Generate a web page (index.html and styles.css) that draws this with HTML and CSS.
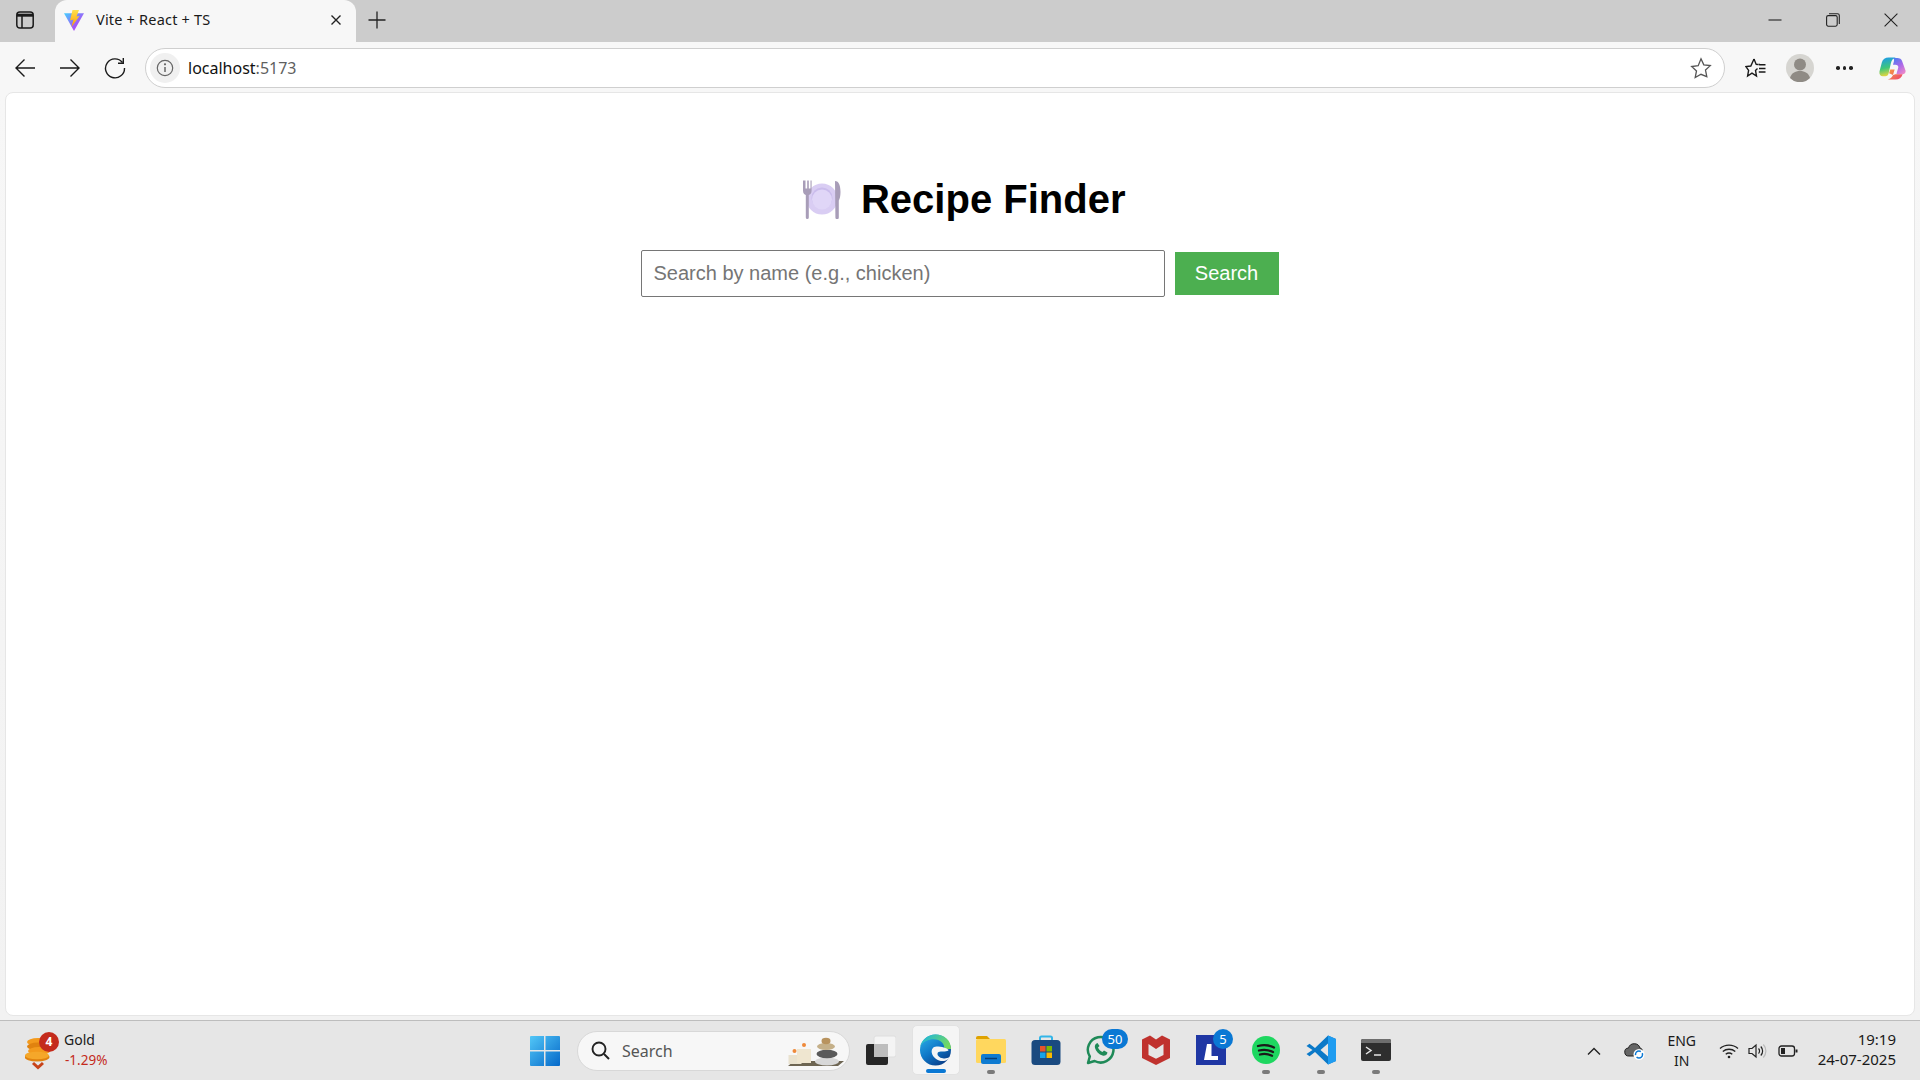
FILE: index.html
```html
<!DOCTYPE html>
<html lang="en">
<head>
<meta charset="utf-8">
<title>Vite + React + TS</title>
<link rel="stylesheet" href="styles.css">
</head>
<body>
<div class="window">
  <div class="tabbar">
    <button class="tab-actions" aria-label="Tab actions">
      <svg width="20" height="20" viewBox="0 0 20 20" fill="none" stroke="#1a1a1a" stroke-width="1.5"><rect x="1.8" y="2" width="16.4" height="16" rx="3"/><path d="M2 5.2h16" stroke-width="3"/><path d="M7 6v12"/></svg>
    </button>
    <div class="tab">
      <svg class="favicon" width="20" height="21" viewBox="0 0 20 21"><defs><linearGradient id="vt" x1="0" y1="0" x2="1" y2="1"><stop offset="0" stop-color="#41d1ff"/><stop offset="0.6" stop-color="#a05cf8"/><stop offset="1" stop-color="#bd34fe"/></linearGradient><linearGradient id="vb" x1="0" y1="0" x2="0" y2="1"><stop offset="0" stop-color="#ffe14d"/><stop offset="1" stop-color="#ff9d00"/></linearGradient></defs><path d="M0 3.300 L20 3.300 L10 21Z" fill="url(#vt)"/><path d="M8.500 0 L15 0 L12.500 6.500 L15.500 6 L7.500 17 L9.500 9.500 L6 10.500 Z" fill="url(#vb)"/></svg>
      <span class="tab-title">Vite + React + TS</span>
      <svg class="tab-close" width="12" height="12" viewBox="0 0 12 12" stroke="#222" stroke-width="1.4"><path d="M1.5 1.5l9 9M10.5 1.5l-9 9"/></svg>
    </div>
    <svg class="new-tab" width="18" height="18" viewBox="0 0 18 18" stroke="#222" stroke-width="1.3"><path d="M9 0.5v17M0.5 9h17"/></svg>
    <div class="win-controls">
      <svg width="14" height="14" viewBox="0 0 14 14" stroke="#222" stroke-width="1.1"><path d="M0.5 7h13"/></svg>
      <svg width="14" height="14" viewBox="0 0 14 14" fill="none" stroke="#222" stroke-width="1.1"><rect x="0.6" y="2.6" width="10.6" height="10.6" rx="1.6"/><path d="M3 0.7h8.5a1.8 1.8 0 0 1 1.8 1.8V11"/></svg>
      <svg width="14" height="14" viewBox="0 0 14 14" stroke="#222" stroke-width="1.1"><path d="M0.6 0.6l12.8 12.8M13.4 0.6L0.6 13.4"/></svg>
    </div>
  </div>

  <div class="toolbar">
    <svg class="nav-btn" width="22" height="20" viewBox="0 0 22 20" fill="none" stroke="#1a1a1a" stroke-width="1.4"><path d="M21 10H2M10.5 1.5L2 10l8.5 8.5"/></svg>
    <svg class="nav-btn" width="22" height="20" viewBox="0 0 22 20" fill="none" stroke="#1a1a1a" stroke-width="1.4"><path d="M1 10h19M11.500 1.500L20 10l-8.500 8.500"/></svg>
    <svg class="nav-btn" width="22" height="22" viewBox="0 0 22 22" fill="none" stroke="#1a1a1a" stroke-width="1.4"><path d="M18.500 5.500A9.500 9.500 0 1 0 20.500 11"/><path d="M19.300 1v5.300H14"/></svg>
    <div class="address">
      <span class="info-chip">
        <svg width="18" height="18" viewBox="0 0 18 18" fill="none" stroke="#666" stroke-width="1.200"><circle cx="9" cy="9" r="7.700"/><path d="M9 8v5" stroke-width="1.500"/><circle cx="9" cy="5.300" r="0.500" fill="#666"/></svg>
      </span>
      <span class="url">localhost<span class="url-port">:5173</span></span>
      <svg class="star" width="22" height="22" viewBox="0 0 22 22" fill="none" stroke="#555" stroke-width="1.300"><path d="M11 1.800l2.800 6 6.500.8-4.800 4.500 1.300 6.500L11 17.300l-5.800 3.200 1.300-6.500-4.800-4.500 6.500-.8z"/></svg>
    </div>
    <svg class="tool-fav" width="22" height="22" viewBox="0 0 22 22" fill="none" stroke="#1a1a1a" stroke-width="1.400"><path d="M9 2l2.200 5.400 2 .1M15 7.500h-1.500M12.500 11.500l-2 1.900 1 5.600L7 16.200 2.600 19l1-5.600L.8 9.500l5-.5L9 2"/><path d="M14.500 7.800H20.500M14 11.500h6.500M13.800 15h6.700"/></svg>
    <div class="avatar">
      <svg width="28" height="28" viewBox="0 0 28 28"><circle cx="14" cy="14" r="14" fill="#d6d5d1"/><circle cx="14" cy="10.500" r="6" fill="#8f8b85"/><path d="M4 24c1.500-5 5-7 10-7s8.500 2 10 7a14 14 0 0 1-20 0z" fill="#8f8b85"/></svg>
    </div>
    <span class="dots"><i></i><i></i><i></i></span>
    <svg class="copilot" width="27" height="27" viewBox="0 0 28 28"><defs><linearGradient id="c1" x1="0.300" y1="0" x2="0.500" y2="1"><stop offset="0" stop-color="#1c9ce8"/><stop offset="0.55" stop-color="#3ec77a"/><stop offset="1" stop-color="#f5d73b"/></linearGradient><linearGradient id="c2" x1="0.200" y1="0" x2="0.800" y2="1"><stop offset="0" stop-color="#4c7df0"/><stop offset="0.5" stop-color="#a868ea"/><stop offset="1" stop-color="#ee88c8"/></linearGradient><linearGradient id="c3" x1="0" y1="0" x2="1" y2="0.600"><stop offset="0" stop-color="#f7a23b"/><stop offset="1" stop-color="#ee4f6a"/></linearGradient></defs><path d="M10 2.500h7.500c-3 .5-4.500 3-5.200 6L10 19c-.4 2-1.500 3-3.500 3H4C1.500 22 0 20 .5 17L3 7.500C3.800 4.500 6.500 2.500 10 2.500z" fill="url(#c1)"/><path d="M14 3h5c2.500 0 4.300 1 5 3.500L27.500 16c.5 2.500-1 4-3.300 4H18l2-7c.5-2-1.200-3-3-3h-2.500l1-3.500C16 4.500 15.500 3.500 14 3z" fill="url(#c2)"/><path d="M10.500 19l1.200-4h4.500l-1 3.500c-.9 4.500-3.500 7-7.500 7H17c4 0 6.500-2 7.500-5.500H18c-2 0-3 .8-3.500.8z" fill="url(#c3)"/></svg>
  </div>

  <div class="viewport">
    <main class="page">
      <h1 class="title">
        <svg class="plate" width="40" height="40" viewBox="0 0 40 40">
          <circle cx="20" cy="20" r="15.500" fill="#d9cdf3"/>
          <circle cx="20" cy="19" r="10.500" fill="#cabcec"/>
          <circle cx="20" cy="20.500" r="10" fill="#e0d6f7"/>
          <path d="M1 1.500v10c0 3 1.500 4 2.800 4.500V38.500a1.500 1.500 0 0 0 3 0V16c1.300-.5 2.800-1.500 2.800-4.500v-10H8.500v8H6.800v-8H5.200v8H3.500v-8z" fill="#a89db8"/>
          <path d="M33 2c3 0 5.500 3 5.500 11 0 4-.7 7-1.700 8.500v17a1.700 1.700 0 0 1-3.400 0z" fill="#a89db8"/>
        </svg>
        <span>Recipe Finder</span>
      </h1>
      <form class="search-form">
        <input class="search-input" type="text" placeholder="Search by name (e.g., chicken)">
        <button class="search-btn" type="button">Search</button>
      </form>
    </main>
  </div>

  <footer class="taskbar">
    <div class="widget">
      <div class="gold-icon">
        <svg width="26" height="38" viewBox="0 0 26 38"><ellipse cx="13" cy="10" rx="11" ry="4" fill="#f39a1d"/><ellipse cx="13" cy="14.500" rx="11" ry="4" fill="#e0820f"/><ellipse cx="14" cy="19" rx="11" ry="4" fill="#f39a1d"/><ellipse cx="12" cy="25" rx="12.500" ry="4.500" fill="#e0820f"/><ellipse cx="12" cy="23.500" rx="12" ry="3.800" fill="#f5a72a"/><path d="M8 31l5 4.500L18 31" fill="none" stroke="#c8431a" stroke-width="3"/></svg>
        <span class="gold-badge">4</span>
      </div>
      <div class="widget-text">
        <span class="widget-name">Gold</span>
        <span class="widget-change">-1.29%</span>
      </div>
    </div>

    <div class="start">
      <svg width="30" height="30" viewBox="0 0 30 30"><defs><linearGradient id="w" x1="0" y1="0" x2="1" y2="1"><stop offset="0" stop-color="#52c7f7"/><stop offset="1" stop-color="#0568c9"/></linearGradient></defs><path d="M1 0h13v14H0V1a1 1 0 0 1 1-1zM15.500 0H29a1 1 0 0 1 1 1v13H15.500zM0 15.500h14V30H1a1 1 0 0 1-1-1zM15.500 15.500H30V29a1 1 0 0 1-1 1H15.500z" fill="url(#w)"/></svg>
    </div>

    <div class="search-pill">
      <svg width="19" height="19" viewBox="0 0 19 19" fill="none" stroke="#222" stroke-width="1.900"><circle cx="8" cy="8" r="6.500"/><path d="M13 13l5 5"/></svg>
      <span class="pill-text">Search</span>
      <svg class="pill-art" width="58" height="32" viewBox="0 0 58 32"><path d="M0 31l6-5h50l-6 5z" fill="#6d6552"/><rect x="0.500" y="20" width="13" height="9" fill="#e9e2cf"/><rect x="9" y="14" width="14" height="14" fill="#efe6d0"/><circle cx="6.500" cy="16" r="2" fill="#ef8a3a"/><circle cx="16" cy="10" r="2" fill="#ef8a3a"/><ellipse cx="39" cy="26.500" rx="12" ry="4" fill="#d8d8d8"/><ellipse cx="39" cy="19" rx="10.500" ry="4.200" fill="#5a5a5a"/><ellipse cx="38" cy="11.500" rx="9" ry="3.500" fill="#c5b089"/><ellipse cx="38" cy="6" rx="4.500" ry="3.200" fill="#b8935e"/></svg>
    </div>

    <div class="apps">
      <div class="app">
        <svg width="30" height="30" viewBox="0 0 30 30"><rect x="8" y="1" width="22" height="21" rx="2" fill="#f4f4f4" stroke="#dedede"/><rect x="0" y="9" width="22" height="21" rx="2" fill="#262626"/><rect x="8" y="9" width="14" height="13" fill="#bdbdbd"/></svg>
      </div>
      <div class="app app-active">
        <svg width="31" height="32" viewBox="0 0 32 32"><defs><linearGradient id="e1" x1="0" y1="0" x2="0.700" y2="1"><stop offset="0" stop-color="#2fb4ea"/><stop offset="0.550" stop-color="#0f78c8"/><stop offset="1" stop-color="#0a3f8a"/></linearGradient><linearGradient id="e2" x1="0" y1="0.300" x2="1" y2="0.700"><stop offset="0" stop-color="#1fb6dc"/><stop offset="1" stop-color="#78dc58"/></linearGradient></defs><circle cx="16" cy="16" r="16" fill="url(#e1)"/><path d="M16 0C8 0 2 5 0 13c3-6 9-8 14-8 7 0 12 5 11 10h7C32 6 25 0 16 0z" fill="url(#e2)"/><path d="M17 12.500c-3.500 0-5.500 3-4.800 6.500 1.300 5.500 7.800 9.500 13.800 8 2-.5 3.500-1.500 4.500-3l-.5-.5c-1.500 1-4 1.500-6.500 1-3.500-.7-5.500-2.700-5.500-4.500 0-1.800 1.800-2.500 3.500-2.500h4c2 0 3.500-.5 4-1.500-2-2-7-3.500-12.500-3.500z" fill="#f5f5f5"/></svg>
      </div>
      <div class="app app-running">
        <svg width="30" height="28" viewBox="0 0 30 28"><path d="M0 2a2 2 0 0 1 2-2h9l3 3h-14z" fill="#dfa200"/><rect x="0" y="3" width="30" height="24" rx="1.500" fill="#ffd75e"/><rect x="5" y="18" width="20" height="10" rx="2" fill="#0f7bd1"/><path d="M9 22.500h12" stroke="#063f78" stroke-width="1.500"/></svg>
      </div>
      <div class="app">
        <svg width="30" height="30" viewBox="0 0 30 30"><path d="M9 6V3a1.500 1.500 0 0 1 1.500-1.500h9A1.500 1.500 0 0 1 21 3v3" fill="none" stroke="#33b5e8" stroke-width="2"/><rect x="0.500" y="5" width="29" height="25" rx="3.500" fill="#1a4a80"/><rect x="9" y="11" width="5.500" height="5.500" fill="#e8542a"/><rect x="15.500" y="11" width="5.500" height="5.500" fill="#7fb800"/><rect x="9" y="17.500" width="5.500" height="5.500" fill="#17a3e8"/><rect x="15.500" y="17.500" width="5.500" height="5.500" fill="#fab900"/></svg>
      </div>
      <div class="app">
        <svg width="30" height="30" viewBox="0 0 30 30" fill="none"><path d="M2 28l1.800-6.500A12.800 12.800 0 1 1 8.600 26z" stroke="#1f8a58" stroke-width="2.500" stroke-linejoin="round"/><path d="M10.500 8.500c-1.500 1-2 2.500-1.500 4.500 1 3.500 4 6.500 7.500 7.500 2 .5 3.500 0 4.500-1.500l.5-1.500-3.500-2-1.500 1.500c-2-.7-3.700-2.400-4.500-4.500l1.500-1.500-2-3z" fill="#1f8a58"/></svg>
        <span class="badge badge-wa">50</span>
      </div>
      <div class="app">
        <svg width="28" height="30" viewBox="0 0 28 30"><path d="M0 4.500L8 0.500l6 4 6-4 8 4V23l-14 7-14-7zM6.500 9v11l7.500 3.700L21.500 20V9l-7.500 5z" fill="#c0322e"/></svg>
      </div>
      <div class="app">
        <svg width="30" height="30" viewBox="0 0 30 30"><rect width="30" height="30" fill="#1f37a4"/><path d="M11 9h4.500v12H22v4H8z" fill="#fff"/></svg>
        <span class="badge badge-l">5</span>
      </div>
      <div class="app app-running">
        <svg width="28" height="28" viewBox="0 0 28 28" fill="none"><circle cx="14" cy="14" r="14" fill="#1ed760"/><path d="M6 10c6-1.500 11-1 16 1.500M7 14.500c5-1.200 9.500-.8 14 1.500M8 18.500c4-1 8-.7 12 1.200" stroke="#1a1a1a" stroke-width="2.300" stroke-linecap="round"/></svg>
      </div>
      <div class="app app-running">
        <svg width="30" height="30" viewBox="0 0 30 30"><path d="M22 0.500l8 3.500v22l-8 3.500-13-12.500-5.500 4.200L0.500 19l6-4-6-4 3-2.200 5.500 4.200z" fill="#0a79c8"/><path d="M22 0.500l8 3.500v22l-8 3.500z" fill="#1f9cf0"/><path d="M22 8.500L14.500 15l7.500 6.500z" fill="#e6e6e6"/></svg>
      </div>
      <div class="app app-running">
        <svg width="30" height="22" viewBox="0 0 30 22"><rect width="30" height="22" rx="2" fill="#2e2e2e"/><path d="M0 2a2 2 0 0 1 2-2h26a2 2 0 0 1 2 2v2H0z" fill="#6e6e6e"/><path d="M5 8l5 3.500L5 15" fill="none" stroke="#e6e6e6" stroke-width="1.500"/><path d="M13 16h7" stroke="#e6e6e6" stroke-width="1.500"/></svg>
      </div>
    </div>

    <div class="tray">
      <div class="tray-cell tray-chevron">
        <svg width="14" height="8" viewBox="0 0 14 8" fill="none" stroke="#222" stroke-width="1.400"><path d="M1 7.500l6-6 6 6"/></svg>
      </div>
      <div class="tray-cell tray-cloud">
        <svg width="22" height="18" viewBox="0 0 22 18"><path d="M5 14a4 4 0 0 1-.5-8 6 6 0 0 1 11.500 0 3 3 0 0 1 1 5.500V14z" fill="#666" stroke="#222" stroke-width="1"/><circle cx="15" cy="12.500" r="5.500" fill="#fff"/><circle cx="15" cy="12.500" r="3.500" fill="none" stroke="#0a78d4" stroke-width="1.500" stroke-dasharray="8 2"/></svg>
      </div>
      <div class="tray-lang"><span>ENG</span><span>IN</span></div>
      <div class="tray-cell tray-small">
        <svg width="20" height="16" viewBox="0 0 20 16" fill="none" stroke="#222" stroke-width="1.300"><path d="M1 5.500c5-4.500 13-4.500 18 0M3.800 8.500c3.500-3 9-3 12.500 0M6.700 11.300c2-1.600 4.600-1.600 6.600 0"/><circle cx="10" cy="14" r="1.300" fill="#222" stroke="none"/></svg>
      </div>
      <div class="tray-cell tray-small">
        <svg width="20" height="16" viewBox="0 0 20 16" fill="none" stroke="#222" stroke-width="1.200"><path d="M1 5.500h3L8 2v12l-4-3.500H1z"/><path d="M10.500 5.500a3.500 3.500 0 0 1 0 5M12.800 3.500a6.500 6.500 0 0 1 0 9"/><path d="M15.300 1.500a9.500 9.500 0 0 1 0 13" stroke="#bbb"/></svg>
      </div>
      <div class="tray-cell tray-small tray-battery">
        <svg width="20" height="14" viewBox="0 0 20 14" fill="none" stroke="#222" stroke-width="1.300"><rect x="1" y="2" width="15.500" height="10" rx="2.500"/><rect x="3" y="4" width="4" height="6" fill="#222" stroke="none"/><path d="M18.500 5.500v3" stroke-width="2"/></svg>
      </div>
      <div class="clock"><span>19:19</span><span>24-07-2025</span></div>
    </div>
  </footer>
</div>
</body>
</html>
```

FILE: styles.css
```css
* { box-sizing: border-box; }
html, body { margin: 0; height: 100%; }
body { font-family: "Noto Sans", "Open Sans", sans-serif; color: #1a1a1a; overflow: hidden; }

.window { display: flex; flex-direction: column; width: 1920px; height: 1080px; }

/* Browser tab strip */
.tabbar { display: flex; align-items: center; height: 42px; background: #cccccc; flex: none; }
.tab-actions { width: 55px; height: 42px; padding: 0 6px 2px 0; background: none; border: 0; display: flex; align-items: center; justify-content: center; }
.tab { display: flex; align-items: center; width: 301px; height: 42px; padding: 0 14px 0 9px; background: #f7f7f7; border-radius: 12px 12px 0 0; font-size: 14.500px; letter-spacing: 0.200px; }
.favicon { flex: none; margin-bottom: 2px; }
.tab-title { margin-left: 12px; margin-bottom: 4px; flex: 1; color: #1a1a1a; }
.tab-close { flex: none; margin-bottom: 2px; }
.new-tab { margin-left: 12px; margin-bottom: 3px; }
.win-controls { margin-left: auto; display: flex; gap: 44px; padding-right: 22px; margin-bottom: 2px; }

/* Browser toolbar */
.toolbar { display: flex; align-items: center; height: 50px; background: #f7f7f7; flex: none; padding: 2px 13px 0 14px; }
.nav-btn { margin-right: 23px; flex: none; }
.nav-btn:nth-child(3) { margin-right: 19px; }
.address { display: flex; align-items: center; width: 1580px; height: 40px; padding: 0 12px 0 4px; background: #fff; border: 1px solid #cfcfcf; border-radius: 20px; }
.info-chip { width: 30px; height: 30px; border-radius: 50%; background: #f0f0f0; display: flex; align-items: center; justify-content: center; flex: none; }
.url { margin-left: 8px; font-size: 16px; flex: 1; color: #111; }
.url-port { color: #5f5f5f; }
.tool-fav { margin-left: 20px; flex: none; }
.avatar { margin-left: 19px; width: 28px; height: 28px; flex: none; line-height: 0; }
.dots { margin-left: 22px; display: flex; gap: 3px; width: 16px; flex: none; }
.dots i { width: 3.500px; height: 3.500px; border-radius: 50%; background: #222; flex: none; }
.copilot { margin-left: 27px; flex: none; }

/* Page */
.viewport { flex: 1; min-height: 0; padding: 0 5px 4px; background: linear-gradient(#f7f7f7, #f2f2f2); }
.page { height: 100%; background: #fff; border: 1px solid #e6e6e6; border-radius: 8px; padding-top: 83px; display: flex; flex-direction: column; align-items: center; }
.title { display: flex; align-items: center; margin: 0 0 28px; height: 46px; font-family: "Liberation Sans", Arial, sans-serif; font-size: 40px; font-weight: 700; color: #000; line-height: 46px; }
.plate { margin: 0 18.500px 0 8px; flex: none; }
.search-form { display: flex; align-items: center; gap: 10px; margin-right: 1px; }
.search-input { width: 524px; height: 47px; padding: 0 12px; font-family: "Liberation Sans", Arial, sans-serif; font-size: 20px; color: #000; background: #fff; border: 1px solid #767676; border-radius: 2px; }
.search-input::placeholder { color: #757575; opacity: 1; }
.search-btn { width: 104px; height: 43px; border: 0; padding: 0; background: #4caf50; color: #fff; font-family: "Liberation Sans", Arial, sans-serif; font-size: 20px; }

/* Taskbar */
.taskbar { display: flex; align-items: center; height: 60px; flex: none; background: #e6e6e6; border-top: 1px solid #bdbdbd; }
.widget { display: flex; align-items: center; width: 517px; padding-left: 25px; flex: none; }
.gold-icon { position: relative; width: 26px; height: 38px; flex: none; line-height: 0; }
.gold-badge { position: absolute; left: 14px; top: 0; width: 20px; height: 20px; border-radius: 50%; background: #c42b1c; color: #fff; font-size: 12px; font-weight: 700; line-height: 20px; text-align: center; }
.widget-text { display: flex; flex-direction: column; margin: -2px 0 0 13px; font-size: 14px; line-height: 20px; }
.widget-name { color: #1a1a1a; }
.widget-change { color: #c42b1c; font-size: 13.500px; margin-left: 1px; }
.start { width: 55px; display: flex; justify-content: center; flex: none; }
.search-pill { position: relative; display: flex; align-items: center; width: 273px; height: 40px; margin-left: 5px; padding-left: 13px; background: #f7f7f7; border: 1px solid #d8d8d8; border-radius: 20px; flex: none; }
.pill-text { margin-left: 12px; font-size: 16px; color: #555; }
.pill-art { position: absolute; right: 3px; top: 3px; }
.apps { display: flex; margin-left: 3px; margin-top: -1px; flex: none; }
.app { position: relative; display: flex; align-items: center; justify-content: center; width: 55px; height: 50px; flex: none; }
.app-active { background: #f5f5f5; border: 1px solid #e2e2e2; border-radius: 5px; width: 48px; margin: 0 3.500px; }
.app-active::after { content: ""; position: absolute; left: 13px; bottom: 1px; width: 20px; height: 4px; border-radius: 2px; background: #0a78d4; }
.app-running::after { content: ""; position: absolute; left: 24px; bottom: 1px; width: 8px; height: 4px; border-radius: 2px; background: #7a7a7a; }
.badge { position: absolute; height: 20px; border-radius: 10px; background: #0a78d4; color: #fff; font-size: 13px; line-height: 20px; text-align: center; }
.badge-wa { left: 29px; top: 4px; width: 26px; }
.badge-l { left: 30px; top: 4px; width: 20px; }
.tray { display: flex; align-items: center; margin-left: auto; padding-right: 24px; flex: none; }
.tray-cell { display: flex; align-items: center; justify-content: center; flex: none; }
.tray-chevron { width: 40px; margin-right: 1px; }
.tray-cloud { width: 40px; margin-right: -1px; }
.tray-lang { display: flex; flex-direction: column; align-items: center; width: 56px; font-size: 14px; line-height: 20px; margin-right: 5px; }
.tray-small { width: 29px; }
.tray-battery { margin-left: 1px; }
.clock { display: flex; flex-direction: column; align-items: flex-end; margin: -3px 0 0 15px; font-size: 15px; line-height: 20px; }
```
